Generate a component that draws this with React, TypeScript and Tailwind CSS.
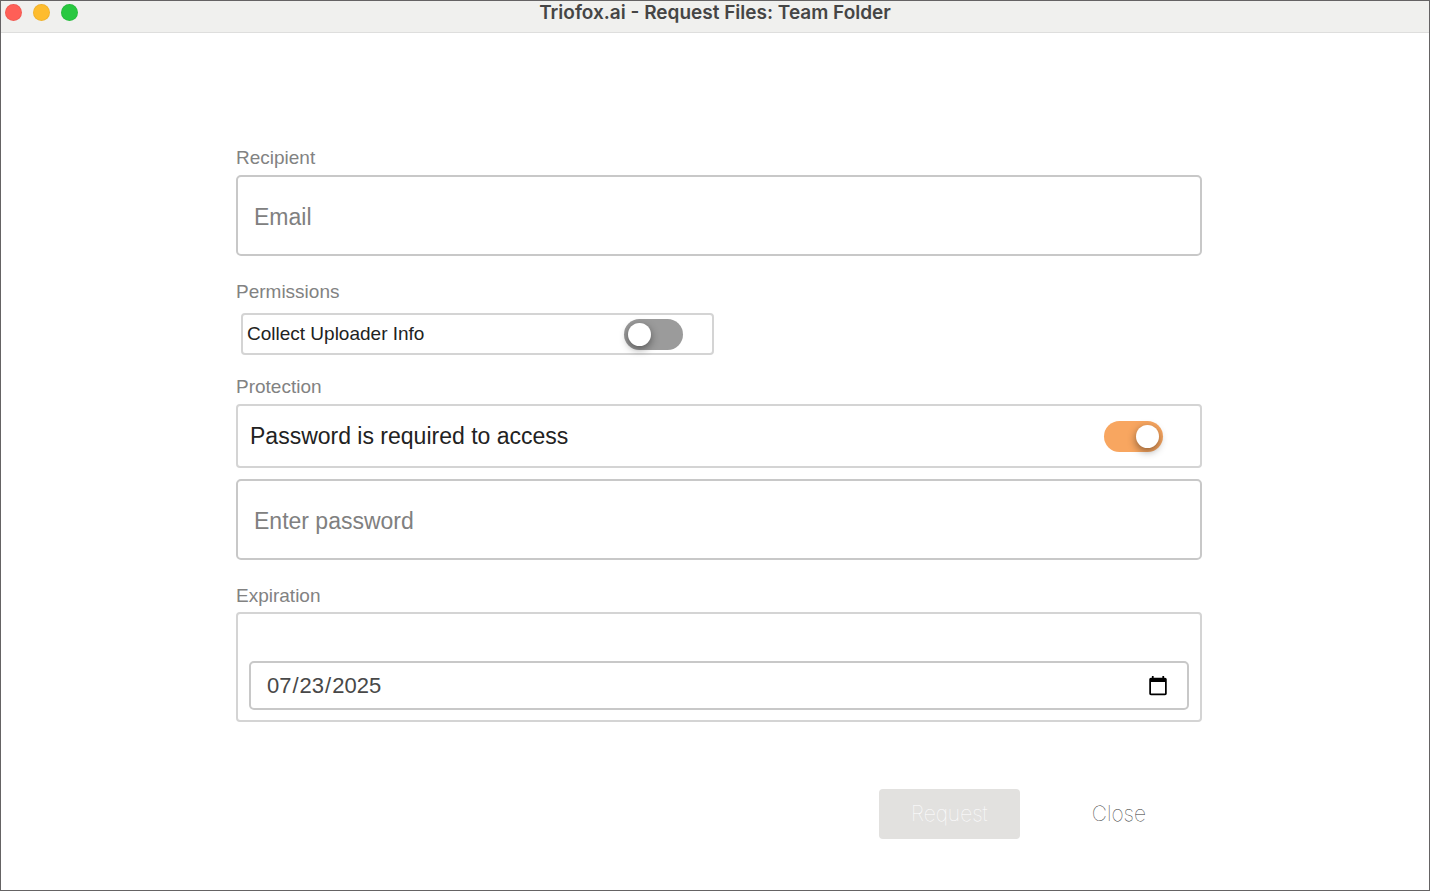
import React, { useState } from "react";

type SwitchProps = {
  id: string;
  checked: boolean;
  onChange: (checked: boolean) => void;
};

const Switch: React.FC<SwitchProps> = ({ id, checked, onChange }) => {
  return (
    <input
      id={id}
      type="checkbox"
      role="switch"
      checked={checked}
      onChange={(e) => onChange(e.target.checked)}
      className="flex h-[31px] w-[59px] shrink-0 cursor-pointer appearance-none items-center rounded-full bg-[#9b9b9b] px-1 before:size-[23px] before:rounded-full before:bg-white before:shadow-[0_3px_8px_rgba(0,0,0,0.45)] before:content-[''] checked:justify-end checked:bg-[#f8a660]"
    />
  );
};

const App: React.FC = () => {
  const [email, setEmail] = useState("");
  const [password, setPassword] = useState("");
  const [collectInfo, setCollectInfo] = useState(false);
  const [needsPassword, setNeedsPassword] = useState(true);
  const [expiration, setExpiration] = useState("2025-07-23");

  const dots = ["bg-[#ff5f57]", "bg-[#febc2e]", "bg-[#28c840]"];

  return (
    <div className="flex min-h-screen flex-col border border-[#656364] bg-white font-['Liberation_Sans',Arial,sans-serif] text-[#222]">
      <header className="grid h-8 grid-cols-[1fr_auto_1fr] border-b border-[#dededd] bg-[#f0f0ee]">
        <div className="flex gap-[11px] pt-[3px] pl-1">
          {dots.map((dot) => (
            <span
              key={dot}
              className={`size-[17px] rounded-full border border-black/5 ${dot}`}
            />
          ))}
        </div>
        <h1 className="font-[Inter,sans-serif] text-[19px] leading-6 font-semibold text-[#454545]">
          Triofox.ai - Request Files: Team Folder
        </h1>
      </header>

      <form
        className="flex flex-col pt-[113px] pr-[227px] pb-12 pl-[235px]"
        onSubmit={(e) => e.preventDefault()}
      >
        <label
          htmlFor="email"
          className="text-[19px] leading-6 text-[#828282]"
        >
          Recipient
        </label>
        <input
          id="email"
          type="email"
          placeholder="Email"
          value={email}
          onChange={(e) => setEmail(e.target.value)}
          className="mt-[5px] h-[81px] w-full rounded-[5px] border-2 border-[#c8c8c8] px-4 pt-[3px] text-[23px] outline-none placeholder:text-[#808080]"
        />

        <h2 className="mt-6 text-[19px] leading-6 text-[#828282]">
          Permissions
        </h2>
        <div className="mt-[9px] ml-[5px] flex h-[42px] w-[49%] items-center justify-between rounded border-2 border-[#d4d4d4] pr-[29px] pl-1">
          <label htmlFor="collect" className="text-[19px] leading-6">
            Collect Uploader Info
          </label>
          <Switch
            id="collect"
            checked={collectInfo}
            onChange={setCollectInfo}
          />
        </div>

        <h2 className="mt-5 text-[19px] leading-6 text-[#828282]">
          Protection
        </h2>
        <div className="mt-[5px] flex h-16 items-center justify-between rounded border-2 border-[#d4d4d4] pr-[37px] pl-3">
          <label htmlFor="protect" className="text-[23px] leading-7">
            Password is required to access
          </label>
          <Switch
            id="protect"
            checked={needsPassword}
            onChange={setNeedsPassword}
          />
        </div>
        {needsPassword && (
          <input
            type="password"
            aria-label="Password"
            placeholder="Enter password"
            value={password}
            onChange={(e) => setPassword(e.target.value)}
            className="mt-[11px] h-[81px] w-full rounded-[5px] border-2 border-[#c8c8c8] px-4 pt-[3px] text-[23px] outline-none placeholder:text-[#808080]"
          />
        )}

        <label
          htmlFor="expiration"
          className="mt-6 text-[19px] leading-6 text-[#828282]"
        >
          Expiration
        </label>
        <div className="mt-1 rounded border-2 border-[#d4d4d4] px-[11px] pt-[47px] pb-2.5">
          <input
            id="expiration"
            type="date"
            value={expiration}
            onChange={(e) => setExpiration(e.target.value)}
            className="h-[49px] w-full rounded-[5px] border-2 border-[#c8c8c8] pr-4 pl-[15px] text-[22px] text-[#484848] outline-none"
          />
        </div>

        <div className="mt-[67px] flex items-center justify-end gap-10 pr-6 font-[Inter,sans-serif] text-[21px] font-thin">
          <button
            type="submit"
            disabled
            className="h-[50px] w-[141px] rounded bg-[#e2e1df] text-white"
          >
            Request
          </button>
          <button type="button" className="h-[50px] px-8 text-[#333]">
            Close
          </button>
        </div>
      </form>
    </div>
  );
};

export default App;
